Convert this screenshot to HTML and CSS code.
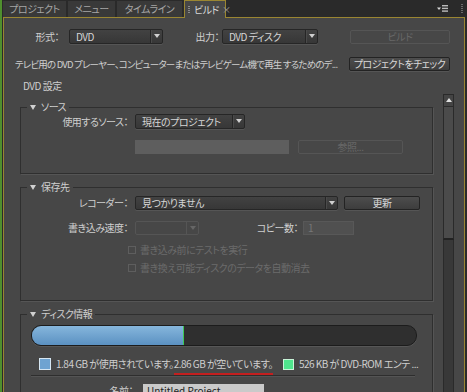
FILE: index.html
```html
<!DOCTYPE html>
<html lang="ja">
<head>
<meta charset="utf-8">
<link rel="stylesheet" href="styles.css">
</head>
<body>
<div class="app">
  <div class="edge"></div>
  <div class="main">
    <div class="tabbar">
      <div class="tab t1">プロジェクト</div>
      <div class="tab t2">メニュー</div>
      <div class="tab t3">タイムライン</div>
      <div class="tab active"><span class="grip"></span>ビルド<span class="close">×</span></div>
      <div class="tabfill"></div>
      <div class="menuicon">
        <svg width="11" height="7" viewBox="0 0 11 7"><path d="M0 2.5h4l-2 2.5z" fill="#d8d8d8"/><rect x="5" y="0" width="6" height="1.4" fill="#bbb"/><rect x="5" y="2.7" width="6" height="1.4" fill="#bbb"/><rect x="5" y="5.4" width="6" height="1.4" fill="#bbb"/></svg>
      </div>
      <div class="grip2"></div>
    </div>
    <div class="panel">
      <div class="header">
        <div class="row r1">
          <span class="lab w60">形式：</span>
          <div class="select s-format"><span class="val">DVD</span><span class="arr"></span></div>
          <span class="lab w59">出力：</span>
          <div class="select s-out"><span class="val">DVD ディスク</span><span class="arr"></span></div>
          <div class="btn disabled b-build">ビルド</div>
        </div>
        <div class="row r2">
          <span class="desc">テレビ用の DVD プレーヤー、コンピューターまたはテレビゲーム機で再生 するためのデ...</span>
          <div class="btn b-check">プロジェクトをチェック</div>
        </div>
      </div>
      <div class="body">
        <div class="scroller">
          <div class="title">DVD 設定</div>

          <fieldset class="sec sec1">
            <legend><span class="tri"></span>ソース</legend>
            <div class="row f1r1">
              <span class="lab w112">使用するソース：</span>
              <div class="select s-src"><span class="val">現在のプロジェクト</span><span class="arr"></span></div>
            </div>
            <div class="row f1r2">
              <div class="path"></div>
              <div class="btn disabled b-browse">参照...</div>
            </div>
          </fieldset>

          <fieldset class="sec sec2">
            <legend><span class="tri"></span>保存先</legend>
            <div class="row f2r1">
              <span class="lab w112">レコーダー：</span>
              <div class="select s-rec"><span class="val">見つかりません</span><span class="arr"></span></div>
              <div class="btn b-upd">更新</div>
            </div>
            <div class="row f2r2">
              <span class="lab w112">書き込み速度：</span>
              <div class="select disabled s-speed"><span class="val"></span><span class="arr"></span></div>
              <span class="lab w104">コピー数：</span>
              <div class="num">1</div>
            </div>
            <div class="row chk c1"><span class="box"></span>書き込み前にテストを実行</div>
            <div class="row chk c2"><span class="box"></span>書き換え可能ディスクのデータを自動消去</div>
          </fieldset>

          <fieldset class="sec sec3">
            <legend><span class="tri"></span>ディスク情報</legend>
            <div class="bar"><div class="fill" style="width:152px"></div></div>
            <div class="row legendrow">
              <span class="sq blue"></span>
              <span class="ltxt">1.84 GB が使用されています。<span class="ul">2.86 GB が空いています。</span></span>
              <span class="sq green"></span>
              <span class="ltxt">526 KB が DVD-ROM エンテ ...</span>
            </div>
            <div class="divider"></div>
            <div class="row namerow">
              <span class="lab w118">名前：</span>
              <div class="name">Untitled Project</div>
            </div>
          </fieldset>
        </div>
        <div class="scrollbar">
          <div class="sb-up"><span></span></div>
          <div class="sb-thumb"></div>
          <div class="sb-track"></div>
        </div>
      </div>
    </div>
  </div>
</div>
</body>
</html>
```
FILE: styles.css
```css
* { box-sizing: border-box; margin: 0; padding: 0; }
html, body { width: 467px; height: 392px; overflow: hidden; }
body {
  background: #2a2a2a;
  font-family: "Noto Sans CJK JP", "Noto Sans", sans-serif;
  font-size: 10px;
  line-height: 12px;
  letter-spacing: -0.5px;
  color: #cfcfcf;
  font-feature-settings: "palt";
}
.app { display: flex; height: 392px; }
.edge { width: 2px; background: #4f8f2e; margin-right: 1px; }
.main { flex: 1; display: flex; flex-direction: column; padding-right: 2px; }

/* tabs */
.tabbar { height: 17px; display: flex; flex-shrink: 0; }
.tab {
  display: flex; align-items: center; justify-content: center; white-space: nowrap;
  background: #393939; color: #a6a6a6; margin-right: 2px;
  border-top: 1px solid #2a2a2a;
}
.t1 { width: 63px; }
.t2 { width: 47px; }
.t3 { width: 65px; }
.tab.active {
  width: 42px; background: #474747; color: #d8d8d8;
  border: 1px solid #9a8632; border-bottom: none;
  height: 18px; margin-bottom: -1px; position: relative; z-index: 1;
  justify-content: flex-start; padding-left: 3px;
}
.grip { width: 2px; height: 8px; margin-right: 4px; flex-shrink: 0;
  background: repeating-linear-gradient(#8a8a8a 0 1px, transparent 1px 2px); }
.close { color: #9a9a9a; margin-left: 3px; font-size: 9px; }
.tabfill { flex: 1; }
.menuicon { display: flex; align-items: center; margin-right: 13px; }
.grip2 { width: 2px; height: 9px; align-self: center; margin-right: 2px;
  background: repeating-linear-gradient(#6a6a6a 0 1px, transparent 1px 2px); }

/* panel */
.panel {
  flex: 1; display: flex; flex-direction: column; min-height: 0;
  background: #474747; border: 1px solid #9a8632; border-bottom: none;
}
.header { flex-shrink: 0; }
.row { display: flex; align-items: center; }
.lab { text-align: right; padding-right: 5px; white-space: nowrap; flex-shrink: 0; }
.w60 { width: 60px; }
.w59 { width: 59px; padding-right: 3px; }
.w112 { width: 112px; }
.w104 { width: 104px; }
.w118 { width: 118px; padding-right: 6px; }

.select {
  display: flex; align-items: stretch; height: 15px; flex-shrink: 0;
  background: linear-gradient(#424242, #373737);
  border: 1px solid #262626; border-radius: 2px;
  box-shadow: 0 1px 0 #555;
  color: #d6d6d6;
}
.select .val { flex: 1; padding-left: 6px; line-height: 12px; white-space: nowrap; overflow: hidden;
  display: flex; align-items: center; }
.select .arr { width: 12px; border-left: 1px solid #262626; position: relative;
  box-shadow: inset 1px 0 0 #4a4a4a; }
.select .arr::after {
  content: ""; position: absolute; left: 3px; top: 4px;
  border-left: 3px solid transparent; border-right: 3px solid transparent;
  border-top: 4px solid #d0d0d0;
}
.select.disabled { background: #474747; border-color: #555; box-shadow: none; }
.select.disabled .arr { border-left-color: #555; box-shadow: none; }
.select.disabled .arr::after { border-top-color: #666; }

.btn {
  height: 15px; display: flex; align-items: center; justify-content: center; flex-shrink: 0;
  background: linear-gradient(#4d4d4d, #3d3d3d); white-space: nowrap;
  border: 1px solid #232323; border-radius: 2px; color: #d8d8d8;
  box-shadow: 0 1px 0 #555;
}
.btn.disabled { background: #474747; border-color: #555; color: #676767; box-shadow: none; }

.r1 { margin-top: 11px; height: 15px; }
.s-format { width: 94px; margin-left: 5px; }
.s-out { width: 96px; }
.b-build { width: 100px; margin-left: 32px; height: 14px; }
.r2 { margin-top: 13px; height: 14px; }
.desc { width: 334px; margin-left: 11px; white-space: nowrap; overflow: hidden; font-size: 9.5px; letter-spacing: -0.8px; }
.b-check { width: 101px; height: 14px; }

.body { flex: 1; display: flex; min-height: 0; overflow: hidden; }
.scroller { flex: 1; min-width: 0; overflow: hidden; }
.title { margin: 9px 0 0 19px; }

/* sections */
.sec {
  width: 413px; margin: 9px 0 0 16px; padding: 0 0 19px 0;
  border: 1px solid #2f2f2f; min-width: 0;
  box-shadow: 1px 1px 0 #555;
}
.sec legend {
  margin-left: 6px; padding: 0 3px; line-height: 12px;
  display: flex; align-items: center;
}
.tri {
  width: 0; height: 0; margin-right: 5px;
  border-left: 3px solid transparent; border-right: 3px solid transparent;
  border-top: 5px solid #d0d0d0;
}
.f1r1 { margin-top: 1px; height: 15px; }
.s-src { width: 110px; margin-left: 2px; }
.f1r2 { margin-top: 11px; height: 14px; }
.path { width: 154px; height: 14px; margin-left: 114px; background: #5e5e5e; }
.b-browse { width: 105px; height: 14px; margin-left: 9px; }

.sec2 { margin-top: 7px; padding-bottom: 26px; }
.f2r1 { margin-top: 3px; height: 14px; }
.s-rec { width: 203px; height: 14px; margin-left: 2px; }
.b-upd { width: 76px; height: 14px; margin-left: 6px; }
.f2r2 { margin-top: 11px; height: 14px; }
.s-speed { width: 64px; height: 14px; margin-left: 2px; }
.num { width: 51px; height: 14px; margin-left: 0; background: #505050; border: 1px solid #585858;
  color: #777; padding-left: 4px; line-height: 12px; }
.chk { height: 12px; margin-left: 107px; color: #6b6b6b; }
.c1 { margin-top: 9px; }
.c2 { margin-top: 6px; }
.box { width: 8px; height: 8px; border: 1px solid #5e5e5e; margin-right: 4px; }

.sec3 { margin-top: 7px; }
.bar {
  width: 386px; height: 21px; margin: 5px 0 0 10px;
  background: #2f2f2f; border: 1px solid #1c1c1c; border-radius: 10px;
  overflow: hidden; box-shadow: 0 1px 0 #575757;
}
.fill { height: 100%; background: linear-gradient(#86b6dc, #5b91c2); border-right: 1px solid #3ecb55; }
.legendrow { margin-top: 11px; height: 14px; }
.sq { width: 12px; height: 12px; flex-shrink: 0; border: 1px solid #d6e6f2; }
.sq.blue { background: #6fa3d1; margin-left: 18px; }
.sq.green { background: #4fe58d; border-color: #c8f4d8; width: 11px; height: 11px; margin-left: 10px; }
.ltxt { margin-left: 5px; white-space: nowrap; }
.ul { display: inline-block; border-bottom: 2px solid #c41f1f; line-height: 12px; padding-bottom: 3px; margin-bottom: -5px; }
.divider { width: 384px; height: 2px; margin: 4px 0 0 10px; border-top: 1px solid #2e2e2e; border-bottom: 1px solid #545454; }
.namerow { margin-top: 7px; height: 14px; }
.name { width: 121px; height: 14px; margin-left: 4px; background: #cacaca; color: #222; padding-left: 4px; line-height: 14px; letter-spacing: 0; }

/* scrollbar */
.scrollbar { width: 11px; margin: 23px 10px 0 0; display: flex; flex-direction: column; flex-shrink: 0; }
.sb-up { height: 13px; background: #444; border: 1px solid #2a2a2a; position: relative; }
.sb-up span {
  position: absolute; left: 2px; top: 3px; width: 0; height: 0;
  border-left: 3px solid transparent; border-right: 3px solid transparent;
  border-bottom: 4px solid #e0e0e0;
}
.sb-thumb { height: 133px; background: #4b4b4b; border: 1px solid #2a2a2a; border-top: none; border-bottom: 2px solid #222; }
.sb-track { flex: 1; background: #383838; border-left: 1px solid #2a2a2a; border-right: 1px solid #2a2a2a; }
```
